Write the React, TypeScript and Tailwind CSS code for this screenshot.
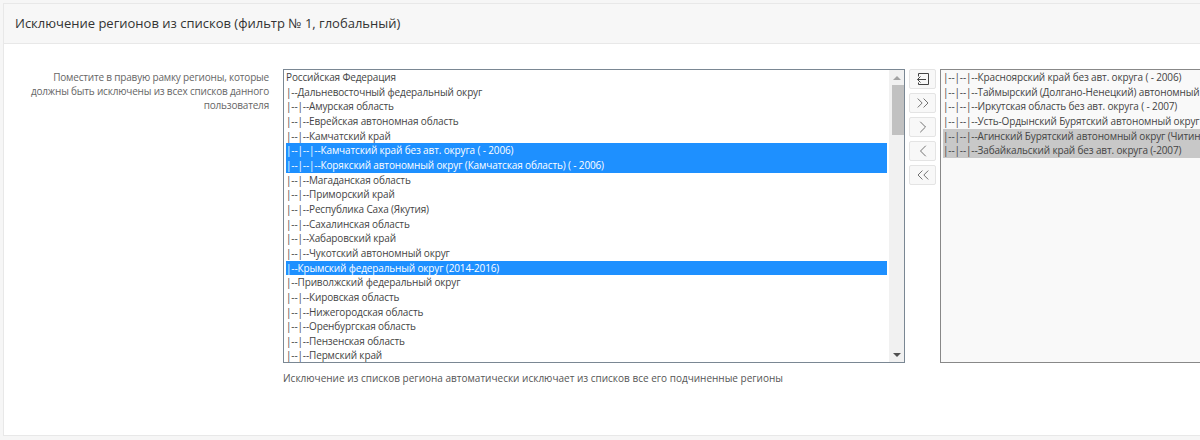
import React from "react";
import { ChevronLeft, ChevronRight, ChevronsLeft, ChevronsRight } from "lucide-react";

const leftItems = [
  { text: "Российская Федерация" },
  { text: "|--Дальневосточный федеральный округ" },
  { text: "|--|--Амурская область" },
  { text: "|--|--Еврейская автономная область" },
  { text: "|--|--Камчатский край" },
  { text: "|--|--|--Камчатский край без авт. округа ( - 2006)", selected: true },
  { text: "|--|--|--Корякский автономный округ (Камчатская область) ( - 2006)", selected: true },
  { text: "|--|--Магаданская область" },
  { text: "|--|--Приморский край" },
  { text: "|--|--Республика Саха (Якутия)" },
  { text: "|--|--Сахалинская область" },
  { text: "|--|--Хабаровский край" },
  { text: "|--|--Чукотский автономный округ" },
  { text: "|--Крымский федеральный округ (2014-2016)", selected: true },
  { text: "|--Приволжский федеральный округ" },
  { text: "|--|--Кировская область" },
  { text: "|--|--Нижегородская область" },
  { text: "|--|--Оренбургская область" },
  { text: "|--|--Пензенская область" },
  { text: "|--|--Пермский край" },
];

const rightItems = [
  { text: "|--|--|--Красноярский край без авт. округа ( - 2006)" },
  { text: "|--|--|--Таймырский (Долгано-Ненецкий) автономный" },
  { text: "|--|--|--Иркутская область без авт. округа ( - 2007)" },
  { text: "|--|--|--Усть-Ордынский Бурятский автономный округ" },
  { text: "|--|--|--Агинский Бурятский автономный округ (Читин", selected: true },
  { text: "|--|--|--Забайкальский край без авт. округа (-2007)", selected: true },
];

const MoveButton = ({ children }: { children: React.ReactNode }) => (
  <button
    type="button"
    className="w-[27px] h-[20px] flex items-center justify-center bg-[#f8f8f8] border border-[#e4e4e4] rounded-[2px] text-[#444]"
  >
    {children}
  </button>
);

const App = () => {
  return (
    <div className="w-[1200px] h-[440px] overflow-hidden bg-[#f6f6f6] pt-[3px] pl-[3px] font-['Open_Sans',sans-serif] text-[#555]">
      <div className="w-[1197px] h-[433px] bg-white border-l border-b border-[#e8e8e8]">
        <div className="h-[41px] bg-[#f7f7f7] border-t border-b border-[#e8e8e8] flex items-center pl-[11px] text-[#333] text-[13px]">
          Исключение регионов из списков (фильтр № 1, глобальный)
        </div>

        <div className="flex pt-[25px]">
          <div className="w-[265px] mr-[14px] pl-[22px] pt-[1px] text-right text-[10px] tracking-[-0.19px] leading-[14px] text-[#666]">
            Поместите в правую рамку регионы, которые должны быть исключены из всех списков данного пользователя
          </div>

          <div className="w-[622px]">
            <div className="h-[294px] border border-[#7a8793] bg-white flex overflow-hidden">
              <div className="flex-1 min-w-0 pl-[2px] pr-[2px] overflow-hidden">
                {leftItems.map((item) => (
                  <div
                    key={item.text}
                    className={
                      item.selected
                        ? "h-[14.67px] text-[10px] tracking-[-0.14px] leading-[14.67px] whitespace-nowrap bg-[#1e90ff] text-white"
                        : "h-[14.67px] text-[10px] tracking-[-0.14px] leading-[14.67px] whitespace-nowrap text-[#444]"
                    }
                  >
                    {item.text}
                  </div>
                ))}
              </div>
              <div className="w-[15px] bg-[#f1f1f1] flex flex-col items-end">
                <div className="w-full h-[15px] flex items-center justify-center">
                  <div className="border-x-[4px] border-x-transparent border-b-[4px] border-b-[#a3a3a3]" />
                </div>
                <div className="w-[12px] h-[50px] bg-[#c1c1c1]" />
                <div className="flex-1" />
                <div className="w-full h-[15px] flex items-center justify-center">
                  <div className="border-x-[4px] border-x-transparent border-t-[4px] border-t-[#505050]" />
                </div>
              </div>
            </div>
            <div className="mt-[8px] text-[10px] leading-[14px] text-[#555]">
              Исключение из списков региона автоматически исключает из списков все его подчиненные регионы
            </div>
          </div>

          <div className="w-[35px] pl-[4px] flex flex-col gap-[4px]">
            <MoveButton>
              <svg width="14" height="14" viewBox="0 0 14 14" fill="none" stroke="currentColor" strokeWidth="1">
                <path d="M2.5 4.5V1.5h10v11h-10V10.5" />
                <path d="M10 7.5H1.5M4.5 4.5l-3 3 3 3" />
              </svg>
            </MoveButton>
            <MoveButton><ChevronsRight size={20} strokeWidth={0.9} /></MoveButton>
            <MoveButton><ChevronRight size={20} strokeWidth={0.9} /></MoveButton>
            <MoveButton><ChevronLeft size={20} strokeWidth={0.9} /></MoveButton>
            <MoveButton><ChevronsLeft size={20} strokeWidth={0.9} /></MoveButton>
          </div>

          <div className="flex-1 min-w-0">
            <div className="h-[294px] border border-[#888] border-r-0 bg-[#f9f9f9] pl-[2px] overflow-hidden">
              {rightItems.map((item) => (
                <div
                  key={item.text}
                  className={
                    item.selected
                      ? "h-[14.67px] text-[10px] tracking-[-0.14px] leading-[14.67px] whitespace-nowrap bg-[#c8c8c8] text-[#444]"
                      : "h-[14.67px] text-[10px] tracking-[-0.14px] leading-[14.67px] whitespace-nowrap text-[#444]"
                  }
                >
                  {item.text}
                </div>
              ))}
            </div>
          </div>
        </div>
      </div>
    </div>
  );
};

export default App;
